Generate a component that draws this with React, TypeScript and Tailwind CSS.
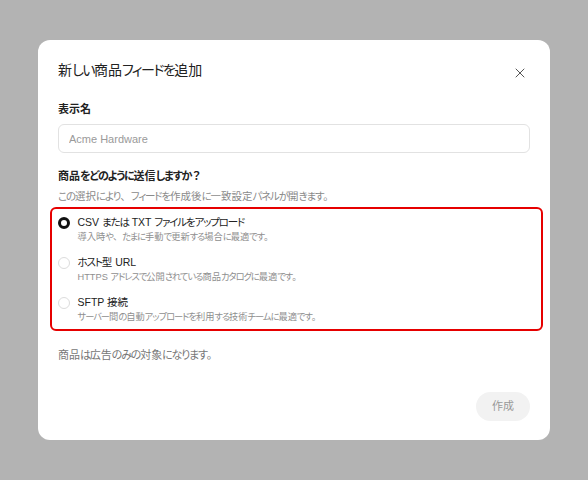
import React, { useState } from 'react';
import { X } from 'lucide-react';

const options = [
  { id: 'csv', label: 'CSV または TXT ファイルをアップロード', desc: '導入時や、たまに手動で更新する場合に最適です。' },
  { id: 'url', label: 'ホスト型 URL', desc: 'HTTPS アドレスで公開されている商品カタログに最適です。' },
  { id: 'sftp', label: 'SFTP 接続', desc: 'サーバー間の自動アップロードを利用する技術チームに最適です。' },
];

// kana runs get proportional widths and tightening; punctuation keeps its full width
function Jp({ text }: { text: string }) {
  const parts = text.split(/([\u3040-\u30ff]+|[、。？])/);
  return (
    <>
      {parts.map((p, i) =>
        /^[、。？]$/.test(p) ? (
          <span key={i} className="[font-feature-settings:normal]">{p}</span>
        ) : /^[\u3040-\u30ff]+$/.test(p) ? (
          <span key={i} className="[font-feature-settings:'palt'] tracking-[-0.11em]">{p}</span>
        ) : (
          <span key={i}>{p}</span>
        )
      )}
    </>
  );
}

export default function App() {
  const [method, setMethod] = useState('csv');

  return (
    <div
      className="w-[588px] h-[480px] bg-[#b3b3b3] pt-[40px] pl-[38px]"
      style={{ fontFamily: '"Liberation Sans", "Noto Sans CJK JP", sans-serif' }}
    >
      <div className="w-[512px] h-[400px] bg-white rounded-[12px] px-5 pt-[18px] flex flex-col">
        {/* Header */}
        <div className="flex items-center justify-between h-[24px]">
          <h2 className="text-[14px] leading-[24px] text-[#222]"><Jp text="新しい商品フィードを追加" /></h2>
          <button className="w-6 h-6 flex items-center justify-center text-[#555] mr-[-2px] mt-[6px]">
            <X size={16} strokeWidth={1.5} />
          </button>
        </div>

        {/* Display name */}
        <label className="mt-[17px] text-[11px] leading-[20px] font-semibold text-[#222]">表示名</label>
        <input
          className="mt-[5px] h-[29px] w-full rounded-[6px] border border-[#e2e2e2] px-[10px] text-[11px] text-[#222] placeholder:text-[#9a9a9a] outline-none"
          placeholder="Acme Hardware"
        />

        {/* Method */}
        <div className="mt-[13px] text-[11px] leading-[20px] font-semibold text-[#222]"><Jp text="商品をどのように送信しますか？" /></div>
        <div className="mt-px text-[10.5px] leading-[18px] text-[#8a8a8a]"><Jp text="この選択により、フィードを作成後に一致設定パネルが開きます。" /></div>

        <div className="mt-[2px] -ml-[8px] -mr-[13px] border-[2.5px] border-[#e60000] rounded-[6px] pl-[5.5px] pt-[5px] pb-[4px] flex flex-col gap-[9px]">
          {options.map((o) => (
            <label key={o.id} className="flex items-start gap-[8px] cursor-pointer" onClick={() => setMethod(o.id)}>
              <span
                className={
                  method === o.id
                    ? 'mt-[3px] w-[12px] h-[12px] rounded-full border-[3.5px] border-[#111] bg-white shrink-0'
                    : 'mt-[3px] w-[12px] h-[12px] rounded-full border border-[#dcdcdc] bg-white shrink-0'
                }
              />
              <span className="flex flex-col">
                <span className="text-[10.5px] leading-[16px] text-[#222]"><Jp text={o.label} /></span>
                <span className="text-[9.25px] leading-[15px] text-[#8f8f8f]"><Jp text={o.desc} /></span>
              </span>
            </label>
          ))}
        </div>

        <div className="mt-[15px] text-[11px] leading-[18px] text-[#777]"><Jp text="商品は広告のみの対象になります。" /></div>

        <div className="mt-auto mb-[19px] flex justify-end">
          <button className="h-[29px] w-[54px] rounded-full bg-[#f2f2f2] text-[11px] text-[#999]">作成</button>
        </div>
      </div>
    </div>
  );
}
